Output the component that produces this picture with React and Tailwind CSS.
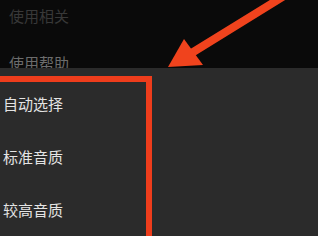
import React from 'react'

const items = ['自动选择', '标准音质', '较高音质']

const Arrow = () => (
  <svg
    className="absolute left-0 top-0 pointer-events-none"
    width="318"
    height="236"
    viewBox="0 0 318 236"
  >
    <line x1="284" y1="-4" x2="190" y2="54" stroke="#f0431d" strokeWidth="8" strokeLinecap="round" />
    <polygon points="168,67 184,39 203,65" fill="#f0431d" />
  </svg>
)

export default function App() {
  return (
    <div
      className="relative w-[318px] h-[236px] overflow-hidden bg-[#0a0a0a]"
      style={{ fontFamily: '"Noto Sans CJK SC", "Noto Sans", sans-serif' }}
    >
      <div className="h-[68px] overflow-hidden pl-[9px]">
        <div className="pt-[5px] text-[15px] leading-[22px] text-[#383838]">使用相关</div>
        <div className="pt-[25px] text-[15px] leading-[22px] text-[#6c6c6c]">使用帮助</div>
      </div>
      <div className="relative h-[168px] bg-[#2b2b2b] pt-[10px] pl-[3px]">
        {items.map((t) => (
          <div key={t} className="flex h-[53px] items-center text-[15px] text-[#e4e4e4]">
            {t}
          </div>
        ))}
        <div className="absolute left-[-10px] top-[8px] h-[200px] w-[162px] border-t-[6px] border-r-[6px] border-[#ee3d1c]" />
      </div>
      <Arrow />
    </div>
  )
}
